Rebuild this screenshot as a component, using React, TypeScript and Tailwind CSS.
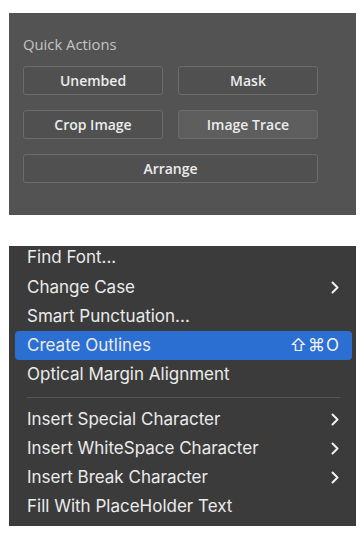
import React from "react";

const Btn = ({ label, active, wide }: { label: string; active?: boolean; wide?: boolean }) => (
  <div
    className={`h-[29px] flex items-center justify-center rounded-[3px] border border-[#6c6c6c] text-[14px] font-semibold text-[#ececec] ${
      active ? "bg-[#5e5e5e]" : "bg-[#505050]"
    } ${wide ? "col-span-2" : ""}`}
  >
    {label}
  </div>
);

const Chevron = () => (
  <svg width="8" height="13" viewBox="0 0 8 13" className="shrink-0">
    <path d="M1.5 1.5 L6.5 6.5 L1.5 11.5" fill="none" stroke="#f2f2f2" strokeWidth="2" strokeLinecap="round" strokeLinejoin="round" />
  </svg>
);

const Item = ({ label, sub, hl, shortcut, first }: { label: string; sub?: boolean; hl?: boolean; shortcut?: string; first?: boolean }) => (
  <div
    className={`${first ? "h-[27px] pb-[3px]" : "h-[29px]"} flex items-center justify-between pl-[12px] ${shortcut ? "pr-[12px]" : "pr-[13px]"} ml-[6px] mr-[4px] rounded-[4px] ${
      hl ? "bg-[#2c6fd2]" : ""
    }`}
  >
    <span className="text-[17px] text-[#ebebeb] whitespace-nowrap">{label}</span>
    {sub && <Chevron />}
    {shortcut && <span className="text-[17px] text-[#f2f2f2] tracking-[1px]">{shortcut}</span>}
  </div>
);

export default function App() {
  return (
    <div className="w-[364px] h-[538px] bg-white pt-[13px] pl-[9px]" style={{ fontFamily: "Inter, 'Noto Sans', sans-serif" }}>
      <div className="w-[347px] h-[202px] bg-[#535353] pl-[14px] pt-[21px]" style={{ fontFamily: "'Open Sans', sans-serif" }}>
        <div className="text-[14.8px] text-[#c4c4c4] leading-[20px]">Quick Actions</div>
        <div className="grid grid-cols-[140px_140px] gap-x-[15px] gap-y-[15px] mt-[12px]">
          <Btn label="Unembed" />
          <Btn label="Mask" />
          <Btn label="Crop Image" />
          <Btn label="Image Trace" active />
          <Btn label="Arrange" wide />
        </div>
      </div>
      <div className="w-[347px] h-[280px] bg-[#3b3b3b] mt-[31px] flex flex-col">
        <Item label="Find Font..." first />
        <Item label="Change Case" sub />
        <Item label="Smart Punctuation..." />
        <Item label="Create Outlines" hl shortcut="⇧⌘O" />
        <Item label="Optical Margin Alignment" />
        <div className="h-[16px] flex items-center pl-[18px] pr-[16px]">
          <div className="h-px w-full bg-[#555555]" />
        </div>
        <Item label="Insert Special Character" sub />
        <Item label="Insert WhiteSpace Character" sub />
        <Item label="Insert Break Character" sub />
        <Item label="Fill With PlaceHolder Text" />
      </div>
    </div>
  );
}
